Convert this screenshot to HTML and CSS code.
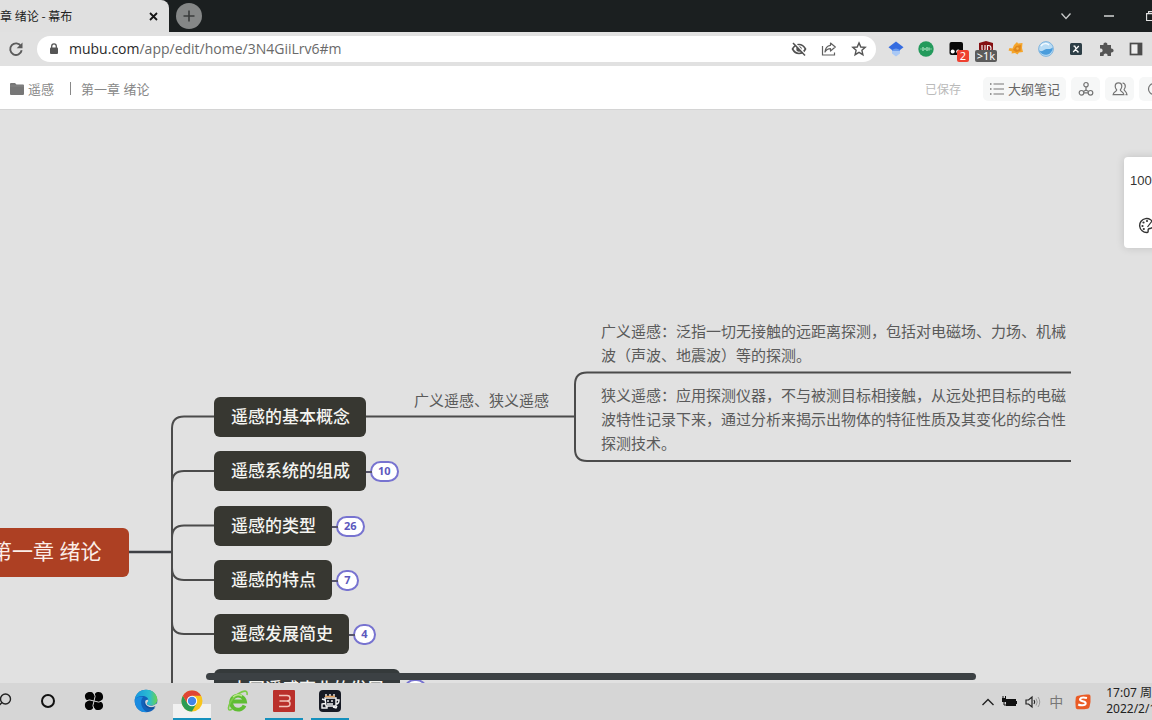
FILE: index.html
```
<!DOCTYPE html>
<html lang="zh-CN">
<head>
<meta charset="utf-8">
<title>第一章 绪论 - 幕布</title>
<link rel="stylesheet" href="styles.css">
</head>
<body>
<header class="tabstrip">
  <div class="tab">
    <span class="tab-title">章 绪论 - 幕布</span>
    <button class="tab-close" aria-label="关闭标签页"><svg width="9" height="9" viewBox="0 0 9 9"><path d="M1 1l7 7M8 1L1 8" stroke="#151515" stroke-width="1.8"/></svg></button>
  </div>
  <button class="new-tab" aria-label="新标签页"><svg width="12" height="12" viewBox="0 0 12 12"><path d="M6 .5v11M.5 6h11" stroke="#3a3c3c" stroke-width="1.6"/></svg></button>
  <div class="window-controls">
    <button aria-label="搜索标签页"><svg width="12" height="8" viewBox="0 0 12 8"><path d="M1.5 1.5L6 6.5l4.500-5" fill="none" stroke="#c8caca" stroke-width="1.3"/></svg></button>
    <button aria-label="最小化"><svg width="10" height="4" viewBox="0 0 10 4"><path d="M0 2h10" stroke="#f2f2f2" stroke-width="1.3"/></svg></button>
    <button aria-label="最大化"><svg width="10" height="10" viewBox="0 0 10 10"><path d="M.6 2.600h7v7h-7zM2.600 2.600V.6h7v7h-2" fill="none" stroke="#e4e4e4" stroke-width="1.1"/></svg></button>
  </div>
</header>

<nav class="toolbar">
  <button class="reload" aria-label="重新加载"><svg width="16" height="16" viewBox="0 0 16 16"><path d="M13 5.200A5.800 5.800 0 1 0 13.700 9.300" fill="none" stroke="#5b5b5b" stroke-width="1.900"/><path d="M14.500 1.500v5.800H8.700z" fill="#5b5b5b"/></svg></button>
  <div class="omnibox">
    <svg width="10" height="12" viewBox="0 0 10 12"><rect x="1" y="4.500" width="8" height="6.500" rx="1" fill="#555"/><path d="M2.700 5V3.200a2.300 2.300 0 0 1 4.600 0V5" fill="none" stroke="#555" stroke-width="1.300"/></svg>
    <p class="url"><span>mubu.com</span>/app/edit/home/3N4GiiLrv6#m</p>
    <div class="omni-actions">
      <button aria-label="阻止第三方 Cookie"><svg width="16" height="16" viewBox="0 0 16 16"><path d="M1.500 8C3.500 4.300 6 3.500 8 3.500s4.500.8 6.500 4.500C12.500 11.700 10 12.500 8 12.500S3.500 11.700 1.500 8z" fill="none" stroke="#515151" stroke-width="1.600"/><circle cx="8" cy="8" r="2.700" fill="#515151"/><path d="M3.500 1.500l11 12" stroke="#fff" stroke-width="1.500"/><path d="M2 2l12 12.500" stroke="#515151" stroke-width="1.500"/></svg></button>
      <button aria-label="分享"><svg width="16" height="16" viewBox="0 0 16 16"><path d="M1.500 5v9h12v-2.500" fill="none" stroke="#606060" stroke-width="1.200"/><path d="M9.500 2l4.800 4-4.800 4V7.600C7 7.600 5.200 8.800 4 11c.3-4 2.200-6.300 5.500-6.700z" fill="none" stroke="#606060" stroke-width="1.200" stroke-linejoin="round"/></svg></button>
      <button aria-label="添加书签"><svg width="16" height="16" viewBox="0 0 16 16"><path d="M8 1.900l1.800 4.100 4.400.4-3.300 2.900 1 4.400L8 11.400l-3.900 2.300 1-4.400-3.300-2.900 4.400-.4z" fill="none" stroke="#555" stroke-width="1.400"/></svg></button>
    </div>
  </div>
  <div class="extensions">
    <button aria-label="学术搜索"><svg width="16" height="16" viewBox="0 0 16 16"><path d="M4 8h8v4.500L8 15.500l-4-3z" fill="#a9c8f5"/><path d="M8 .5l7.500 5.800L12 9H4L.5 6.300z" fill="#356ce0"/><path d="M4 9q4-3 8 0v1H4z" fill="#6b9bed"/></svg></button>
    <button aria-label="语音扩展"><svg width="16" height="16" viewBox="0 0 16 16"><circle cx="8" cy="8" r="7.700" fill="#249a5c"/><path d="M3 7.500v1M5 6v4M7 7v2M9 6v4M11 6.500v3M13 7.500v1" stroke="#a8dfbe" stroke-width="1.300"/></svg></button>
    <button class="has-badge" aria-label="脚本管理"><svg width="16" height="16" viewBox="0 0 16 16"><rect x="1.500" y="1" width="13.500" height="13" rx="2" fill="#090909"/><circle cx="4.700" cy="10.500" r="2" fill="#fff"/><circle cx="10.200" cy="10.500" r="2" fill="#fff"/></svg><span class="badge badge-red">2</span></button>
    <button class="has-badge" aria-label="广告拦截"><svg width="16" height="16" viewBox="0 0 16 16"><path d="M8 0l7 2v6c0 4-4 7-7 8-3-1-7-4-7-8V2z" fill="#850f12"/><path d="M4 4v4q0 2 1.500 2T7 8V4M9.500 10V4.500h1q2.500 0 2.500 2.800T10.500 10z" fill="none" stroke="#eee" stroke-width="1.200"/></svg><span class="badge badge-gray">&gt;1k</span></button>
    <button aria-label="橙色扩展"><svg width="16" height="16" viewBox="0 0 16 16"><path d="M6 4l3-3 1 1.500 4.500-.5-.5 5 1 4-4 .5-1.500 2L7 12l-3.500.5L4 10.500.5 9.500l1-2.500 3 .5z" fill="#f5a52b"/><path d="M5 9l3-4 5-1-.5 6-4.500 1z" fill="#df861c"/><circle cx="9.500" cy="7.500" r="1.200" fill="#f8b64c"/></svg></button>
    <button aria-label="蓝色扩展"><svg width="16" height="16" viewBox="0 0 16 16"><circle cx="8" cy="8" r="7.400" fill="#b9dcf5" stroke="#6ca9da" stroke-width=".8"/><path d="M.8 9c2.500 3 5-.5 7.500-1 2.500-.5 3 1 6.500-1.500A7.200 7.200 0 0 1 .8 9z" fill="#4b9ddc"/><path d="M3 5c2-3 6-3 8-1" stroke="#f3faff" stroke-width="1.500" fill="none"/></svg></button>
    <button aria-label="X 扩展"><svg width="14" height="14" viewBox="0 0 14 14"><rect x="1" y="1" width="12" height="12" rx="1.500" fill="#2d3e46"/><path d="M4.500 4.200h1.300L8.500 9.800h1.300M9.800 4L4.200 10" stroke="#fff" stroke-width="1.200" fill="none"/></svg></button>
    <button aria-label="扩展程序"><svg width="16" height="16" viewBox="0 0 16 16"><path d="M2 4h3.500a2 2 0 1 1 3.800 0H13v3.600a2 2 0 1 1 0 3.800V15H9.500a2 2 0 1 0-3.800 0H2v-3.700a2 2 0 1 0 0-3.800z" fill="#555"/></svg></button>
    <button aria-label="侧边栏"><svg width="14" height="14" viewBox="0 0 14 14"><rect x="1.500" y="1.500" width="11" height="11" fill="#eee" stroke="#4c4c4c" stroke-width="1.700"/><path d="M8.500 1.500h4v11h-4z" fill="#4c4c4c"/></svg></button>
  </div>
</nav>

<div class="doc-header">
  <svg class="folder" width="14" height="14" viewBox="0 0 14 14"><path d="M0 2q0-1 1-1h4l1.500 1.500H13q1 0 1 1V12q0 1-1 1H1q-1 0-1-1z" fill="#777"/><path d="M0 4h14" stroke="#8b8b8b" stroke-width=".8"/></svg>
  <a class="crumb" href="#folder">遥感</a>
  <span class="crumb-sep"></span>
  <a class="crumb" href="#doc">第一章 绪论</a>
  <div class="doc-actions">
    <span class="saved">已保存</span>
    <button class="outline-btn"><svg width="16" height="14" viewBox="0 0 16 14"><path d="M4.500 2H15M4.500 7H15M4.500 12H15" stroke="#777" stroke-width="1.200"/><path d="M1 2h1.500M1 7h1.500M1 12h1.500" stroke="#777" stroke-width="1.400"/></svg>大纲笔记</button>
    <button class="icon-btn" aria-label="思维导图"><svg width="16" height="16" viewBox="0 0 16 16" fill="none" stroke="#747474" stroke-width="1.200"><circle cx="8" cy="3.700" r="2.200"/><circle cx="3.500" cy="11.800" r="2.300"/><circle cx="12.500" cy="11.800" r="2.300"/><path d="M8 6v3M5.800 11.800h4.400M8 9l-2.500 1.500M8 9l2.500 1.500"/></svg></button>
    <button class="icon-btn" aria-label="协作"><svg width="16" height="16" viewBox="0 0 16 16" fill="none" stroke="#747474" stroke-width="1.200"><path d="M6.500 1.800c-2.200 0-3.300 1.500-3.300 3.500 0 1.700.6 2.700 1.500 3.700-.2 1.500-3.300 1.500-3.600 4.700h10.800c-.3-3.200-3.400-3.200-3.600-4.700.9-1 1.500-2 1.500-3.700 0-2-1.100-3.500-3.300-3.500z"/><path d="M10.500 2c2 .2 2.800 1.500 2.800 3.300 0 1.500-.5 2.300-1.200 3.200.1 1.500 2.600 2 2.900 5.200h-1.500"/></svg></button>
    <button class="icon-btn" aria-label="更多"><svg width="16" height="16" viewBox="0 0 16 16"><circle cx="8" cy="8" r="5.500" fill="none" stroke="#747474" stroke-width="1.200"/></svg></button>
  </div>
</div>

<main class="canvas">
  <svg class="links" width="1152" height="573" viewBox="0 0 1152 573" fill="none" stroke="#4b4b4b" stroke-width="2">
    <path d="M129 442H172" stroke="#3d3f44" stroke-width="2.500"/>
    <path d="M214 306.500H184Q172 306.500 172 318.500V573"/>
    <path d="M214 361H184Q172 361 172 373M214 415.500H184Q172 415.500 172 427.500M214 470H184Q172 470 172 458M214 524H184Q172 524 172 512"/>
    <path d="M365 306.500H575M1071 262.500H587Q575 262.500 575 274.500V339Q575 351 587 351H1071"/>
  </svg>
  <div class="root">第一章 绪论</div>
  <div class="topic topic-1"><span class="node">遥感的基本概念</span></div>
  <div class="topic topic-2"><span class="node">遥感系统的组成</span><button class="count">10</button></div>
  <div class="topic topic-3"><span class="node">遥感的类型</span><button class="count">26</button></div>
  <div class="topic topic-4"><span class="node">遥感的特点</span><button class="count">7</button></div>
  <div class="topic topic-5"><span class="node">遥感发展简史</span><button class="count">4</button></div>
  <div class="topic topic-6"><span class="node">中国遥感事业的发展</span><button class="count" aria-label="展开"></button></div>
  <span class="leaf leaf-label">广义遥感、狭义遥感</span>
  <p class="leaf leaf-broad">广义遥感：泛指一切无接触的远距离探测，包括对电磁场、力场、机械波（声波、地震波）等的探测。</p>
  <p class="leaf leaf-narrow">狭义遥感：应用探测仪器，不与被测目标相接触，从远处把目标的电磁波特性记录下来，通过分析来揭示出物体的特征性质及其变化的综合性探测技术。</p>
  <div class="scrollbar"></div>
  <aside class="side-panel">
    <span>100%</span>
    <button aria-label="主题"><svg width="17" height="17" viewBox="0 0 17 17"><path d="M15.500 7A7 7 0 1 0 9 15.500c2 0 .5-2.500 1.500-3.500s5 .5 5-5z" fill="none" stroke="#333" stroke-width="1.400"/><g fill="#333"><circle cx="4.500" cy="9" r="1.100"/><circle cx="5.500" cy="5.500" r="1.100"/><circle cx="9" cy="4" r="1.100"/><circle cx="5.800" cy="12" r="1.100"/></g><path d="M14 4l-4.500 6" stroke="#333" stroke-width="1.200"/></svg></button>
  </aside>
</main>

<footer class="taskbar">
  <div class="apps">
    <button aria-label="搜索"><svg width="24" height="24" viewBox="0 0 24 24"><circle cx="15.500" cy="10" r="5" fill="none" stroke="#222" stroke-width="1.400"/><path d="M12 13.500L7 18.500" stroke="#222" stroke-width="1.400"/></svg></button>
    <button aria-label="Cortana"><svg width="24" height="24" viewBox="0 0 24 24"><circle cx="12" cy="12" r="6" fill="none" stroke="#111" stroke-width="2"/></svg></button>
    <button aria-label="风扇"><svg width="24" height="24" viewBox="0 0 24 24"><path d="M12 12C8 12.500 3.500 12 3 8 2.500 4 6 2.500 9 3c3 .5 4.500 4 3 9zM12 12c-.5-4 0-8.500 4-9 4-.5 5.500 3 5 6s-4 4.500-9 3zM12 12c4-.5 8.500 0 9 4 .5 4-3 5.500-6 5s-4.500-4-3-9zM12 12c.5 4 0 8.500-4 9-4 .5-5.500-3-5-6s4-4.500 9-3z" fill="#050505"/><path d="M12 12Q14.500 7 11.500 3M12 12Q17 14.500 21 11.500M12 12Q9.500 17 12.500 21M12 12Q7 9.500 3 12.500" fill="none" stroke="#d6d6d6" stroke-width="1"/></svg></button>
    <button class="pinned-first" aria-label="Edge"><svg width="24" height="24" viewBox="0 0 24 24"><defs><linearGradient id="edge" x1="0" x2="1"><stop stop-color="#1796df"/><stop offset=".65" stop-color="#2bbdd0"/><stop offset="1" stop-color="#6cd34c"/></linearGradient></defs><circle cx="12" cy="12" r="11.300" fill="#1261b9"/><path d="M.7 11C1.500 4.500 6 .7 12 .7c7 0 11.300 4.800 11.300 9.800 0 4-3 6-6 6-3.500 0-4.500-1.300-4.500-2 0-1 1.500-1.500 1.500-3.500S12 7 8.500 7C5 7 2 8.500.7 11z" fill="url(#edge)"/><path d="M9 8c-3.500 4-2 12 4 15C6 24 .5 18.500.7 11 2 8.500 5 7 9 8z" fill="#1a8be0"/><path d="M14.300 11c0 2-1.500 2.500-1.500 3.500 0 2.300 6 3.300 9 .4L24 14l-1 4.500c-5 1.500-11.800-1-11.800-5.500 0-1.500 1.300-2.500 3.100-2z" fill="#d6d6d6"/><path d="M10.500 12c0 5 5 8 11 5-.7 1.200-1.500 2.200-2.500 3-6 .5-10-4-8.500-8z" fill="#174e97"/></svg></button>
    <button class="running active" aria-label="Chrome"><svg width="24" height="24" viewBox="0 0 24 24"><circle cx="12" cy="12" r="10.500" fill="#f8c51d"/><path d="M2.900 6.750A10.500 10.500 0 0 0 12 22.500l4.500-8L12 12l-4.500 2.500z" fill="#2b9b53"/><path d="M12 6.800h9.100a10.500 10.500 0 0 0-18.200 0l4.500 7.500z" fill="#df4435"/><circle cx="12" cy="12" r="5.200" fill="#fff"/><circle cx="12" cy="12" r="4.200" fill="#4285e8"/></svg></button>
    <button aria-label="360 浏览器"><svg width="24" height="24" viewBox="0 0 24 24"><path d="M18.500 16.500A7 7 0 1 1 19 12.500H7" fill="none" stroke="#5fbd33" stroke-width="3.800"/><path d="M6 20C-1 25 3 11 12 5c6-4 10-4 9 1" fill="none" stroke="#7ccc48" stroke-width="1.600"/><path d="M7 8q4-4 9-1" stroke="#b9e88a" stroke-width="1.500" fill="none"/></svg></button>
    <button class="running" aria-label="B 应用"><svg width="24" height="24" viewBox="0 0 24 24"><rect x="1" y="1" width="22" height="22" rx="1" fill="#ba302b"/><path d="M7 6.500h8q3 0 3 2.700T15 12H7.500M15 12q3 0 3 2.800t-3 2.700H7" fill="none" stroke="#f3c4bb" stroke-width="1.500"/></svg></button>
    <button class="running" aria-label="录屏"><svg width="24" height="24" viewBox="0 0 24 24"><rect x="1" y="1" width="22" height="22" rx="4" fill="#171a24"/><path d="M7 9h11v8H8zM18 11h3q0 4-3 4M7 11l-3-1M8 14l-4 1v4h5v-2M15 18l3 1 1-2M8 8V5M12 7V5M16 8V5M10 11v2M14 11v2M9 15h6" fill="none" stroke="#f4f4f4" stroke-width="1.400"/><path d="M7 7.500h10" stroke="#e4a15e" stroke-width="1.500"/></svg></button>
  </div>
  <div class="tray">
    <svg width="14" height="14" viewBox="0 0 14 14"><path d="M1.500 10L7 4.500 12.500 10" fill="none" stroke="#222" stroke-width="1.400"/></svg>
    <svg width="16" height="14" viewBox="0 0 16 14"><rect x="5" y="4" width="10" height="7" fill="#111"/><path d="M15 6h1v3h-1zM1 3h4v4H1z" fill="#111"/><path d="M2 1v2M4.500 1v2M3 7v3h3" stroke="#111" fill="none"/></svg>
    <svg width="16" height="14" viewBox="0 0 16 14" fill="none"><path d="M1 5h2.500L7 2v10L3.500 9H1z" stroke="#222" stroke-width="1.200"/><path d="M9 5q1.500 2 0 4" stroke="#222" stroke-width="1.200"/><path d="M11 3.500q2.500 3.500 0 7M13 2q3.500 5 0 10" stroke="#999"/></svg>
    <span class="ime">中</span>
    <svg class="sogou" width="18" height="18" viewBox="0 0 18 18"><path d="M3 3q6-2 12-1.500 1.500 0 1.500 2Q17 9 15.500 14q-.5 1.500-2 1.700-5 1-10 .5Q2 16 1.700 14.500 1 9 1.800 4.500 2 3.500 3 3z" fill="#ea5b25"/><path d="M13 5Q7 3.500 6 6.200c-.7 2.300 6 1.600 5.700 4.100-.3 2.700-5.500 2.200-7.500 1.200" fill="none" stroke="#fff" stroke-width="2"/></svg>
    <div class="clock"><span>17:07 周五</span><span>2022/2/18</span></div>
  </div>
</footer>
</body>
</html>
```
FILE: styles.css
```
* { box-sizing: border-box; }
body {
  margin: 0;
  height: 100vh;
  display: flex;
  flex-direction: column;
  overflow: hidden;
  background: #e1e1e1;
  color: #222;
  font-family: "Noto Sans", "Noto Sans CJK SC", sans-serif;
}
button { border: 0; padding: 0; background: none; font: inherit; color: inherit; display: flex; align-items: center; justify-content: center; flex: none; }
p { margin: 0; }
svg { flex: none; display: block; }

.tabstrip { display: flex; align-items: center; height: 32px; flex: none; background: #1b1f20; }
.tab { display: flex; align-items: center; width: 169px; height: 32px; padding-right: 11px; background: #e0e0e0; border-radius: 0 8px 0 0; }
.tab-title { flex: 1; font-size: 12px; line-height: 16px; padding-bottom: 1px; white-space: nowrap; color: #222; font-family: "Noto Sans CJK SC", sans-serif; }
.new-tab { width: 26px; height: 26px; margin-left: 7px; border-radius: 50%; background: #858787; }
.window-controls { display: flex; align-items: center; gap: 32px; margin-left: auto; margin-right: -4px; height: 26px; }

.toolbar { display: flex; align-items: center; height: 34px; flex: none; padding: 0 8px; background: #e1e1e1; }
.omnibox { display: flex; align-items: center; flex: 1; height: 26px; margin-left: 13px; padding: 0 9px 0 12px; border-radius: 13px; background: #fff; }
.url { margin-left: 10px; font-family: "Open Sans", sans-serif; font-size: 14px; line-height: 20px; color: #6a6a6a; }
.url span { color: #2a2a2a; }
.omni-actions { display: flex; gap: 14px; margin-left: auto; }
.extensions { display: flex; justify-content: space-between; width: 256px; margin-left: 12px; }
.extensions button { width: 16px; height: 16px; }
.has-badge { position: relative; }
.badge { position: absolute; top: 9px; height: 12px; border-radius: 2px; color: #fff; font-size: 11px; line-height: 12px; text-align: center; }
.badge-red { left: 9px; width: 12px; background: #ee4030; }
.badge-gray { left: -3px; width: 22px; background: #5b5b5b; }

.doc-header { display: flex; align-items: center; height: 44px; flex: none; padding: 2px 0 0 10px; background: #fff; border-bottom: 1px solid #d4d4d4; font-size: 13px; }
.crumb { color: #888; text-decoration: none; white-space: nowrap; }
.folder + .crumb { margin-left: 4px; }
.crumb-sep { width: 1px; height: 13px; margin: 0 10px 0 16px; background: #888; }
.doc-actions { display: flex; align-items: center; gap: 5px; margin-left: auto; margin-right: -16px; }
.saved { margin-right: 17px; color: #bababa; font-size: 12px; }
.outline-btn { gap: 3px; height: 24px; padding: 0 6px; border-radius: 5px; background: #f6f7f7; color: #666; }
.icon-btn { width: 29px; height: 24px; border-radius: 5px; background: #f6f7f7; }

.canvas { position: relative; flex: 1; overflow: hidden; background: #e1e1e1; }
.links { position: absolute; left: 0; top: 0; }
.root { position: absolute; left: -37px; top: 418px; padding: 0 28px; height: 49px; border-radius: 6px; background: #ad4023; color: #fbeee8; font-size: 21px; line-height: 46px; white-space: nowrap; }
.topic { position: absolute; left: 214px; display: flex; align-items: center; }
.topic-1 { top: 287px; }
.topic-2 { top: 341px; }
.topic-3 { top: 396px; }
.topic-4 { top: 450px; }
.topic-5 { top: 504px; }
.topic-6 { top: 559px; }
.node { height: 40px; padding: 0 16px 0 17px; border-radius: 6px; background: #373731; color: #f4f4f0; font-size: 17px; font-weight: 500; line-height: 39px; white-space: nowrap; }
.topic-6 .node { background: #353a3b; }
.count { position: relative; height: 21px; min-width: 23px; margin-left: 4px; padding: 0 6px; border: 2px solid #7773d0; border-radius: 11px; background: #fff; color: #5c58bd; font-size: 11px; font-weight: 700; line-height: 16px; }
.count::before { content: ""; position: absolute; right: 100%; top: 8px; width: 6px; height: 2px; background: #55546a; }
.leaf { position: absolute; color: #5a5a5a; font-size: 15px; line-height: 24px; font-family: "Noto Sans CJK SC", sans-serif; }
.leaf-label { left: 414px; top: 278px; white-space: nowrap; }
.leaf-broad { left: 601px; top: 209px; width: 470px; }
.leaf-narrow { left: 601px; top: 273px; width: 470px; }
.scrollbar { position: absolute; left: 206px; top: 563px; width: 770px; height: 7px; border-radius: 4px; background: #3c4144; }
.side-panel { position: absolute; top: 47px; right: -26px; width: 54px; height: 91px; padding: 14px 6px; display: flex; flex-direction: column; gap: 26px; border-radius: 4px; background: #fff; box-shadow: 0 0 8px rgba(0, 0, 0, 0.14); font-family: "Liberation Sans", sans-serif; font-size: 13px; line-height: 20px; color: #333; }
.side-panel button { margin-left: 8px; align-self: flex-start; }

.taskbar { display: flex; align-items: stretch; justify-content: space-between; height: 37px; flex: none; background: #d6d6d6; }
.apps { display: flex; gap: 8px; margin-left: -17px; }
.apps button { width: 38px; border-bottom: 2px solid transparent; }
.apps .pinned-first { margin-left: 6px; }
.apps .running { border-bottom-color: #1590bd; }
.apps .active { background: linear-gradient(transparent 60%, #f1f1f1 60%); }
.tray { display: flex; align-items: center; gap: 8px; margin-right: -12px; }
.tray svg:first-child { margin-right: -2px; }
.ime { font-size: 14px; line-height: 16px; color: #777; }
.sogou { margin-left: 3px; }
.clock { display: flex; flex-direction: column; margin-left: 6px; padding-bottom: 1px; font-size: 12px; line-height: 16px; white-space: nowrap; color: #222; }
```
